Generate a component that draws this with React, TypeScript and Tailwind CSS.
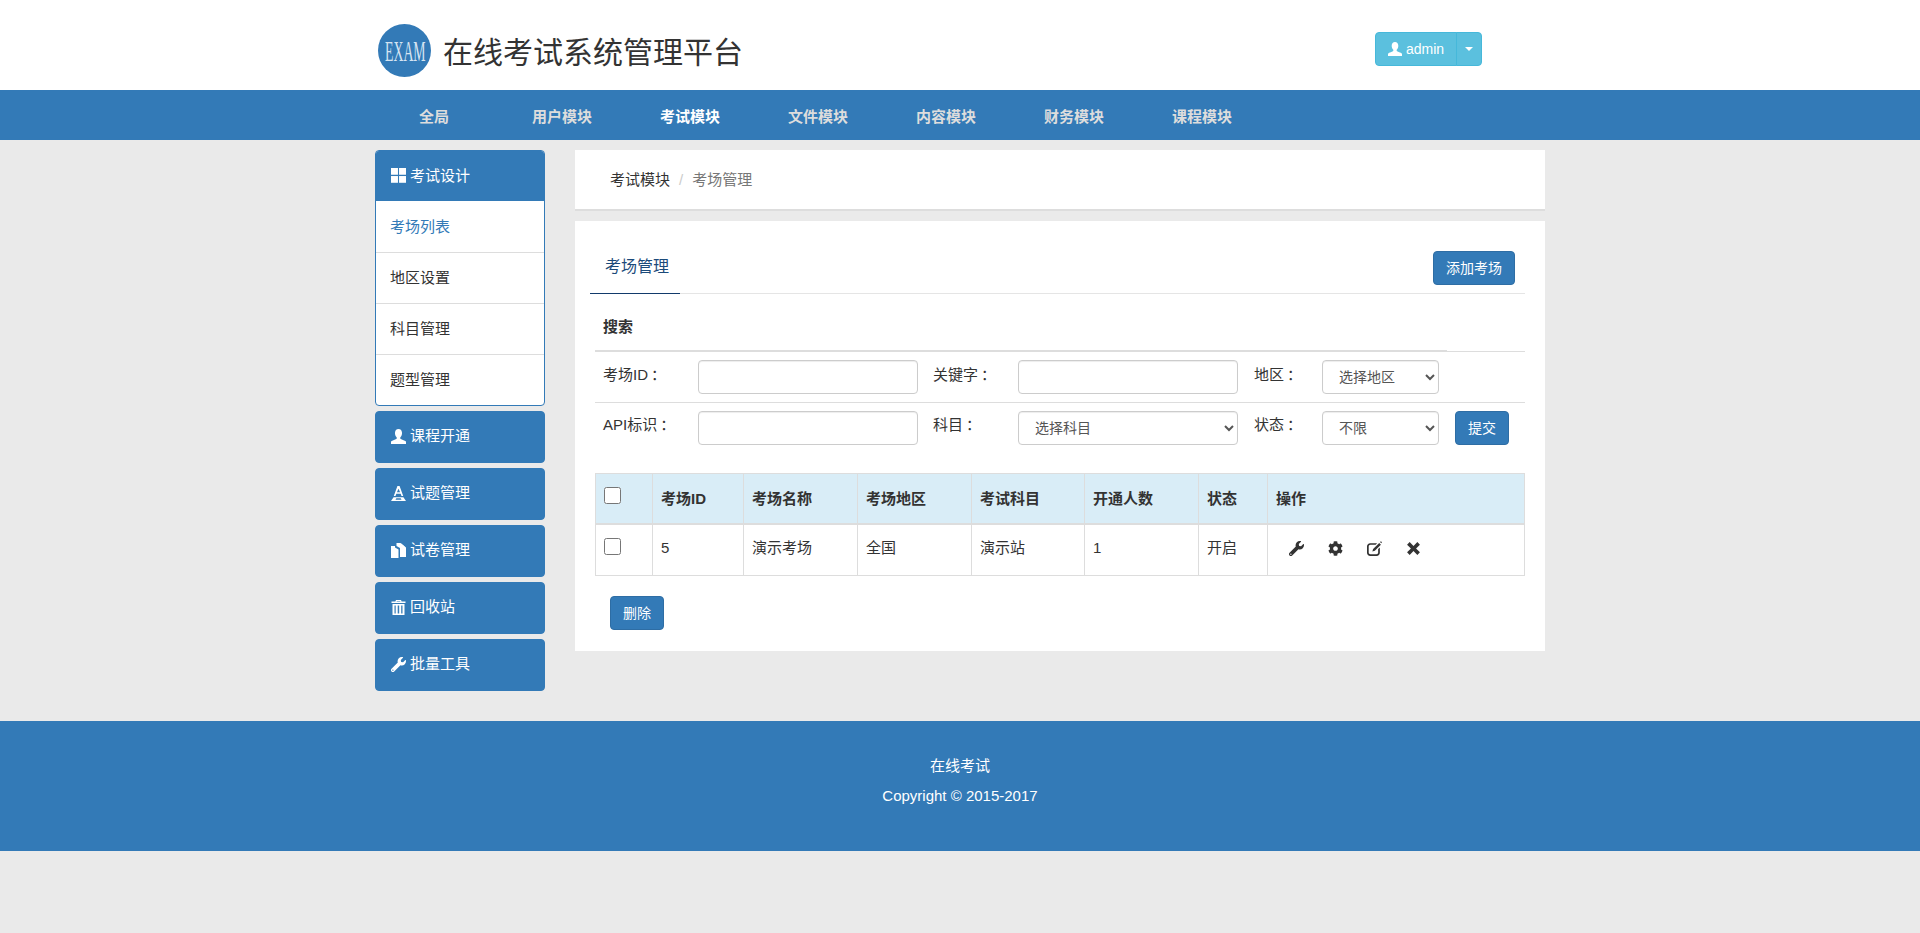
import React from "react";
import { FaWrench, FaCog } from "react-icons/fa";

const UserIcon = ({ className }: { className?: string }) => (
  <svg viewBox="0 0 14 14" fill="currentColor" className={className}>
    <path d="M7 0C5 0 3.7 1.5 3.7 3.8c0 1.7.6 3.1 1.6 4v1.3c-.6.7-4.3 1.5-5.3 2.6V14h14v-2.3c-1-1.1-4.7-1.9-5.3-2.6V7.8c1-.9 1.6-2.3 1.6-4C10.3 1.5 9 0 7 0z" />
  </svg>
);
const GridIcon = ({ className }: { className?: string }) => (
  <svg viewBox="0 0 14 14" fill="currentColor" className={className}>
    <rect x="0" y="0" width="6.5" height="6.3" />
    <rect x="7.5" y="0" width="6.5" height="6.3" />
    <rect x="0" y="7.5" width="6.5" height="6.3" />
    <rect x="7.5" y="7.5" width="6.5" height="6.3" />
  </svg>
);
const FontIcon = ({ className }: { className?: string }) => (
  <svg viewBox="0 0 14 14" fill="currentColor" className={className}>
    <path fillRule="evenodd" d="M6 0h2l3.4 9.4h-1.6L9 7.2H5l-.8 2.2H2.6L6 0zm1 2.6L5.5 5.9h3L7 2.6z" />
    <path fillRule="evenodd" d="M2.4 10.4h9.2L14 14H0zM5 11.4h4l.8 1.4H4.2z" />
  </svg>
);
const CopyIcon = ({ className }: { className?: string }) => (
  <svg viewBox="0 0 15 15" fill="currentColor" className={className}>
    <path d="M0 3h4v1.5L7.5 6.5V15H0z" />
    <path d="M5.5 0H9.5L15 4.5V14H9V5L5.5 3z" />
    <path d="M10 .6V3.8h4z" />
  </svg>
);
const TrashIcon = ({ className }: { className?: string }) => (
  <svg viewBox="0 0 14 15" fill="currentColor" className={className}>
    <path d="M4.5 0h5l.6 1.6H14V3H0V1.6h3.9zM5.3 1l-.2.6h3.8L8.7 1z" fillRule="evenodd" />
    <path fillRule="evenodd" d="M1 4h12v11H1zm2 1.5v8h1.2v-8zm3.2 0v8h1.5v-8zm3.5 0v8H11v-8z" />
  </svg>
);
const EditIcon = ({ className }: { className?: string }) => (
  <svg viewBox="0 0 14 14" fill="currentColor" className={className}>
    <path d="M3 2h6.5L8 3.6H3.2c-.9 0-1.6.7-1.6 1.6v5.6c0 .9.7 1.6 1.6 1.6h5.6c.9 0 1.6-.7 1.6-1.6V7.5L12 6v5c0 1.7-1.3 3-3 3H3c-1.7 0-3-1.3-3-3V5c0-1.7 1.3-3 3-3z" />
    <path d="M11.4 1.8l1.6 1.6-5.7 5.7-2.3.7.7-2.3zM12.2 1l.8-.8 1 1-.8 1z" />
  </svg>
);
const CloseIcon = ({ className }: { className?: string }) => (
  <svg viewBox="0 0 14 14" fill="currentColor" className={className}>
    <path d="M3.4 1L7 4.6 10.6 1 13 3.4 9.4 7l3.6 3.6-2.4 2.4L7 9.4 3.4 13 1 10.6 4.6 7 1 3.4z" />
  </svg>
);

const navItems = ["全局", "用户模块", "考试模块", "文件模块", "内容模块", "财务模块", "课程模块"];
const subItems = ["考场列表", "地区设置", "科目管理", "题型管理"];
const sideItems = [
  { label: "课程开通", Icon: UserIcon },
  { label: "试题管理", Icon: FontIcon },
  { label: "试卷管理", Icon: CopyIcon },
  { label: "回收站", Icon: TrashIcon },
  { label: "批量工具", Icon: FaWrench },
];
const heads = ["考场ID", "考场名称", "考场地区", "考试科目", "开通人数", "状态", "操作"];

const Colon = () => <span className="ml-[3px]">：</span>;
const inputCls =
  "h-[34px] w-[220px] rounded border border-[#ccc] bg-white shadow-[inset_0_1px_1px_rgba(0,0,0,0.075)]";
const selectCls =
  "h-[34px] rounded border border-[#ccc] bg-white px-3 text-sm text-[#555] shadow-[inset_0_1px_1px_rgba(0,0,0,0.075)]";
const btnCls =
  "h-[34px] rounded border border-[#2e6da4] bg-[#337ab7] text-sm text-white";
const th = "border border-[#ddd] border-b-2 px-2 pt-px text-left align-middle font-bold";
const td = "border border-[#ddd] px-2 pt-[13px] align-top h-[52px]";

export default function App() {
  return (
    <div className="min-h-[933px] bg-[#eaeaea] text-[15px] leading-5 text-[#333] font-['Liberation_Sans','Noto_Sans_CJK_SC',sans-serif]">
      <header className="h-[90px] bg-white pt-[12px]">
        <div className="mx-auto flex h-full w-[1170px] items-start pt-[12px]">
          <svg viewBox="0 0 53 53" className="ml-[3px] h-[53px] w-[53px] shrink-0">
            <circle cx="26.5" cy="26.5" r="26.5" fill="#337ab7" />
            <text
              transform="translate(7 37) scale(0.46 1)"
              fill="#d5e4f2"
              fontSize="30"
              fontFamily="'Liberation Serif', serif"
            >
              EXAM
            </text>
          </svg>
          <h1 className="ml-[12px] mt-[12px] text-[30px] leading-[34px] font-normal text-[#333]">在线考试系统管理平台</h1>
          <div className="ml-auto mr-[63px] mt-[8px] flex h-[34px] text-sm text-white">
            <button className="flex w-[82px] items-center justify-center gap-1 rounded-l border border-[#46b8da] bg-[#5bc0de]">
              <UserIcon className="h-[14px] w-[14px]" />
              admin
            </button>
            <button className="-ml-px flex w-[26px] items-center justify-center rounded-r border border-[#46b8da] bg-[#5bc0de]">
              <span className="border-x-4 border-t-4 border-x-transparent border-t-white" />
            </button>
          </div>
        </div>
      </header>

      <nav className="h-[50px] bg-[#337ab7]">
        <ul className="mx-auto flex h-full w-[1180px] items-center pt-[3px]">
          {navItems.map((n) => (
            <li
              key={n}
              className={`w-[128px] text-center font-bold ${n === "考试模块" ? "text-white" : "text-[#ddd]"}`}
            >
              {n}
            </li>
          ))}
        </ul>
      </nav>

      <div className="mx-auto mb-[30px] flex w-[1170px] items-start gap-[30px] pt-[10px]">
        <aside className="w-[170px] shrink-0">
          <div className="overflow-hidden rounded border border-[#337ab7] bg-white">
            <div className="flex h-[50px] items-center gap-1 bg-[#337ab7] pb-px pl-[15px] text-white">
              <GridIcon className="h-[15px] w-[15px]" />
              考试设计
            </div>
            {subItems.map((s, i) => (
              <div
                key={s}
                className={`flex h-[51px] items-center pl-[15px] ${i > 0 ? "border-t border-[#ddd]" : ""} ${
                  i === 0 ? "text-[#337ab7]" : ""
                }`}
              >
                <span className="-ml-px">{s}</span>
              </div>
            ))}
          </div>
          {sideItems.map(({ label, Icon }) => (
            <div
              key={label}
              className="mt-[5px] flex h-[52px] items-center gap-1 rounded border border-[#337ab7] bg-[#337ab7] pb-[2px] pl-[15px] text-white"
            >
              <Icon className="h-[15px] w-[15px]" />
              {label}
            </div>
          ))}
        </aside>

        <main className="w-[970px]">
          <div className="flex h-[61px] items-center border-b-2 border-[#ddd] bg-white pl-[35px]">
            <span>考试模块</span>
            <span className="px-[9px] text-[#ccc]">/</span>
            <span className="text-[#777]">考场管理</span>
          </div>

          <section className="mt-[10px] h-[430px] bg-white pl-[15px] pr-[20px]">
            <div className="flex h-[73px] items-end justify-between border-b border-[#e5e5e5]">
              <div className="-mb-px w-[90px] border-b border-[#123a6b] pb-[15px] pl-[15px] text-base leading-[22px] text-[#1b4a7a]">
                考场管理
              </div>
              <button className="mb-[8px] mr-[10px] w-[82px] self-end rounded border border-[#2e6da4] bg-[#337ab7] py-[6px] text-sm text-white">
                添加考场
              </button>
            </div>

            <div className="ml-[5px] w-[930px]">
              <div className="flex h-[58px]">
                <div className="w-[852px] border-b-2 border-[#ddd] pl-2 pt-[23px] font-bold">搜索</div>
                <div className="flex-1 border-b border-[#ddd]" />
              </div>

              <div className="flex items-start border-b border-[#ddd] pb-2 pl-2 pt-2">
                <div className="w-[95px] pt-[5px]">考场ID<Colon /></div>
                <input className={inputCls} />
                <div className="w-[100px] pl-[15px] pt-[5px]">关键字<Colon /></div>
                <input className={inputCls} />
                <div className="w-[84px] pl-4 pt-[5px]">地区<Colon /></div>
                <select className={`${selectCls} w-[117px]`}>
                  <option>选择地区</option>
                </select>
              </div>

              <div className="flex items-start pl-2 pt-2">
                <div className="w-[95px] pt-[4px]">API标识<Colon /></div>
                <input className={inputCls} />
                <div className="w-[100px] pl-[15px] pt-[4px]">科目<Colon /></div>
                <select className={`${selectCls} w-[220px]`}>
                  <option>选择科目</option>
                </select>
                <div className="w-[84px] pl-4 pt-[4px]">状态<Colon /></div>
                <select className={`${selectCls} w-[117px]`}>
                  <option>不限</option>
                </select>
                <button className={`${btnCls} ml-4 w-[54px]`}>提交</button>
              </div>

              <table className="mt-[28px] w-[929px] table-fixed border-collapse">
                <colgroup>
                  <col className="w-[57px]" />
                  <col className="w-[91px]" />
                  <col className="w-[114px]" />
                  <col className="w-[114px]" />
                  <col className="w-[113px]" />
                  <col className="w-[114px]" />
                  <col className="w-[69px]" />
                  <col className="w-[257px]" />
                </colgroup>
                <thead>
                  <tr className="h-[50px] bg-[#d9edf7]">
                    <th className={th}>
                      <input type="checkbox" className="relative -top-[3px] block h-[17px] w-[17px]" />
                    </th>
                    {heads.map((h) => (
                      <th key={h} className={th}>{h}</th>
                    ))}
                  </tr>
                </thead>
                <tbody>
                  <tr>
                    <td className={td}>
                      <input type="checkbox" className="block h-[17px] w-[17px]" />
                    </td>
                    <td className={td}>5</td>
                    <td className={td}>演示考场</td>
                    <td className={td}>全国</td>
                    <td className={td}>演示站</td>
                    <td className={td}>1</td>
                    <td className={td}>开启</td>
                    <td className={td}>
                      <div className="flex pl-px pt-[3px]">
                        <span className="flex w-[39px] justify-center"><FaWrench className="h-[15px] w-[15px]" /></span>
                        <span className="flex w-[39px] justify-center"><FaCog className="h-[15px] w-[15px]" /></span>
                        <span className="flex w-[39px] justify-center"><EditIcon className="h-[15px] w-[15px]" /></span>
                        <span className="flex w-[39px] justify-center"><CloseIcon className="h-[15px] w-[15px]" /></span>
                      </div>
                    </td>
                  </tr>
                </tbody>
              </table>

              <button className={`${btnCls} ml-[15px] mt-[20px] w-[54px]`}>删除</button>
            </div>
          </section>
        </main>
      </div>

      <footer className="h-[130px] bg-[#337ab7] pt-[30px] text-center leading-[30px] text-white">
        <div>在线考试</div>
        <div>Copyright © 2015-2017</div>
      </footer>
    </div>
  );
}
